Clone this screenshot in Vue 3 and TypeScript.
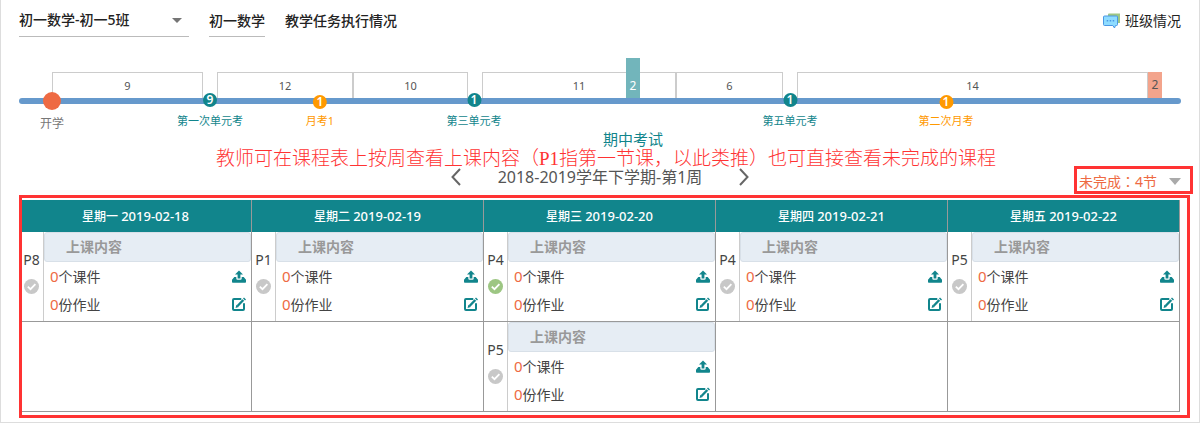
<script setup lang="ts">
import { ref } from 'vue'

interface Span { width: number; label?: string; kind: 'gap' | 'range' | 'holiday' }
interface Point { at: number; kind: string; count?: string; name: string }
interface Lesson { period: string; done: boolean }

const total = 1162
const spans: Span[] = [
  { width: 33, kind: 'gap' },
  { width: 151, label: '9', kind: 'range' },
  { width: 14, kind: 'gap' },
  { width: 136, label: '12', kind: 'range' },
  { width: 115, label: '10', kind: 'range' },
  { width: 14, kind: 'gap' },
  { width: 194, label: '11', kind: 'range' },
  { width: 107, label: '6', kind: 'range' },
  { width: 14, kind: 'gap' },
  { width: 351, label: '14', kind: 'range' },
  { width: 14, label: '2', kind: 'holiday' },
  { width: 19, kind: 'gap' },
]
const points: Point[] = [
  { at: 33, kind: 'start', name: '开学' },
  { at: 191, kind: 'unit', count: '9', name: '第一次单元考' },
  { at: 301, kind: 'month', count: '1', name: '月考1' },
  { at: 455, kind: 'unit', count: '1', name: '第三单元考' },
  { at: 614, kind: 'midterm', count: '2', name: '期中考试' },
  { at: 771, kind: 'unit', count: '1', name: '第五单元考' },
  { at: 927, kind: 'month', count: '1', name: '第二次月考' },
]
const days = [
  { day: '星期一', date: '2019-02-18' },
  { day: '星期二', date: '2019-02-19' },
  { day: '星期三', date: '2019-02-20' },
  { day: '星期四', date: '2019-02-21' },
  { day: '星期五', date: '2019-02-22' },
]
const rows: (Lesson | null)[][] = [
  [
    { period: 'P8', done: false },
    { period: 'P1', done: false },
    { period: 'P4', done: true },
    { period: 'P4', done: false },
    { period: 'P5', done: false },
  ],
  [null, null, { period: 'P5', done: false }, null, null],
]
const course = ref('初一数学-初一5班')
const pending = ref('未完成：4节')
</script>

<template>
  <main class="page">
    <header class="top">
      <div class="pick course">
        <select v-model="course" aria-label="课程班级">
          <option>初一数学-初一5班</option>
        </select>
        <svg class="caret" width="10" height="5" viewBox="0 0 10 5"><path d="M0 0h10L5 5z" fill="#757575" /></svg>
      </div>
      <a class="tab current" href="#course">初一数学</a>
      <a class="tab" href="#tasks">教学任务执行情况</a>
      <a class="class-link" href="#class">
        <svg width="18" height="16" viewBox="0 0 18 16">
          <path d="M6 .5h11v9.500h-3V4H5V1.500q0-1 1-1z" fill="#9dc683" />
          <path d="M1.500 3h12q1 0 1 1v7.500q0 1-1 1H12.500L11.500 15L9.800 12.500H1.500q-1 0-1-1V4q0-1 1-1z" fill="#8edcff" stroke="#4a97e4" />
          <path d="M3.700 7h1.500v1.500H3.700zM6.700 7h1.500v1.500H6.700zM9.700 7h1.500v1.500H9.700z" fill="#4a97e4" />
        </svg>
        班级情况
      </a>
    </header>

    <section class="timeline" aria-label="学期进度">
      <div class="spans">
        <div v-for="(s, i) in spans" :key="i" :class="['span', s.kind]" :style="{ width: (s.width / total) * 100 + '%' }">{{ s.label }}</div>
      </div>
      <div class="track"></div>
      <div v-for="p in points" :key="p.at" :class="['point', p.kind]" :style="{ left: (p.at / total) * 100 + '%' }">
        <span class="dot">{{ p.count }}</span>
        <span class="name">{{ p.name }}</span>
      </div>
    </section>

    <p class="note">教师可在课程表上按周查看上课内容（P1指第一节课，以此类推）也可直接查看未完成的课程</p>

    <div class="bar">
      <nav class="week">
        <button type="button" aria-label="上一周">
          <svg width="10" height="18" viewBox="0 0 10 18"><path d="M9 1L1.500 9L9 17" /></svg>
        </button>
        <h1>2018-2019学年下学期-第1周</h1>
        <button type="button" aria-label="下一周">
          <svg width="10" height="18" viewBox="0 0 10 18"><path d="M1 1L8.500 9L1 17" /></svg>
        </button>
      </nav>
      <div class="pick pending">
        <select v-model="pending" aria-label="未完成课程">
          <option>未完成：4节</option>
        </select>
        <svg class="caret" width="12" height="7" viewBox="0 0 12 7"><path d="M0 0h12L6 7z" fill="#aaa" /></svg>
      </div>
    </div>

    <div class="schedule">
      <table>
        <thead>
          <tr>
            <th v-for="d in days" :key="d.date" scope="col">{{ d.day }} <span>{{ d.date }}</span></th>
          </tr>
        </thead>
        <tbody>
          <tr v-for="(row, r) in rows" :key="r">
            <td v-for="(lesson, c) in row" :key="c">
              <div v-if="lesson" class="lesson">
                <div class="period">
                  {{ lesson.period }}
                  <svg :class="['state', { done: lesson.done }]" width="15" height="15" viewBox="0 0 15 15">
                    <circle cx="7.500" cy="7.500" r="7.500" />
                    <path d="M3.800 7.600L6.500 10.200L11.400 5.200" fill="none" stroke="#fff" stroke-width="1.800" />
                  </svg>
                </div>
                <div class="content">
                  <div class="title">上课内容</div>
                  <div class="line">
                    <span><b>0</b>个课件</span>
                    <button type="button" aria-label="上传课件">
                      <svg width="14" height="14" viewBox="0 0 14 14" fill="#11858c">
                        <path d="M7 1.500L11 5.500H8.400V9.500H5.600V5.500H3z" />
                        <path d="M2.300 8H4.300V9.500q0 1.300 1.300 1.300h2.800q1.300 0 1.300-1.300V8h2L14 10.700V13q0 .8-.8.8H.8Q0 13.800 0 13v-2.300z" />
                      </svg>
                    </button>
                  </div>
                  <div class="line">
                    <span><b>0</b>份作业</span>
                    <button type="button" aria-label="布置作业">
                      <svg width="14" height="14" viewBox="0 0 14 14" fill="none" stroke="#11858c">
                        <path d="M9.300 2H2q-1 0-1 1V12q0 1 1 1h9q1 0 1-1V6.200" stroke-width="2" />
                        <path d="M5.500 9L11.300 3" stroke-width="2.400" />
                        <path d="M3.600 10.900L4.400 7.800L6.700 10.100z" fill="#11858c" stroke="none" />
                        <path d="M12 .5L14 2.500L13 3.500L11 1.500z" fill="#11858c" stroke="none" />
                      </svg>
                    </button>
                  </div>
                </div>
              </div>
            </td>
          </tr>
        </tbody>
      </table>
      <div class="outline"></div>
    </div>
  </main>
</template>

<style>
body { background: #fff; }
</style>

<style scoped>
* { box-sizing: border-box; }
.page {
  margin-right: 4px;
  padding: 0 18px 10px;
  border: 1px solid #ddd;
  border-top: 0;
  background: #fff;
  color: #444;
  font: 14px/20px "Noto Sans", "Noto Sans CJK SC", sans-serif;
}
svg { display: block; flex: none; }
a { color: inherit; text-decoration: none; }
button { padding: 0; border: 0; background: none; cursor: pointer; }

.top { display: flex; align-items: flex-end; height: 37px; color: #222; }
.pick { position: relative; display: flex; align-items: center; }
.pick select {
  width: 100%;
  padding: 0;
  border: 0;
  outline: 0;
  background: none;
  color: inherit;
  font: inherit;
  appearance: none;
}
.caret { position: absolute; pointer-events: none; }
.course { width: 170px; height: 33px; margin-right: 20px; border-bottom: 1px solid #bbb; font-weight: 500; }
.course .caret { right: 7px; }
.tab { height: 26px; margin-right: 20px; font-weight: 500; }
.current { border-bottom: 1px solid #bbb; }
.class-link { display: flex; align-items: center; gap: 4px; height: 30px; padding-bottom: 2px; margin-left: auto; }

.timeline { position: relative; height: 76px; margin-top: 35px; }
.spans { display: flex; height: 26px; font-size: 11px; line-height: 26px; text-align: center; color: #555; }
.span { flex: none; }
.range { border: 1px solid #ccc; border-bottom: 0; }
.holiday { background: #f3a48c; font-size: 12px; }
.track { height: 6px; border-radius: 3px; background: #6699cc; }
.point {
  position: absolute;
  top: 21px;
  display: flex;
  flex-direction: column;
  align-items: center;
  transform: translateX(-50%);
  white-space: nowrap;
  font-size: 11px;
  line-height: 14px;
}
.dot { width: 14px; height: 14px; border-radius: 7px; color: #fff; font-size: 12px; font-weight: 600; text-align: center; }
.name { margin-top: 7px; }
.unit { color: #11858c; }
.unit .dot { background: #11858c; }
.month { top: 23px; color: #ff9900; }
.month .dot { background: #ff9900; }
.month .name { margin-top: 5px; }
.start { top: 20px; color: #777; font-size: 12px; }
.start .dot { width: 18px; height: 18px; border-radius: 9px; background: #ee6a43; }
.midterm { top: -14px; color: #11858c; font-size: 15px; }
.midterm .dot { width: 14px; height: 40px; padding-top: 21px; border-radius: 0; background: #72b5bb; font-weight: 400; }
.midterm .name { margin-top: 34px; }

.note {
  margin: 0;
  padding-left: 12px;
  color: #ff3333;
  font: 19px/22px "Liberation Serif", "Noto Sans CJK SC", serif;
  font-weight: 300;
  text-align: center;
}
.bar { display: grid; grid-template-columns: 1fr auto 1fr; align-items: start; height: 30px; }
.week { grid-column: 2; display: flex; align-items: center; justify-content: space-between; width: 298px; height: 14px; }
.week h1 { margin: 0; font-size: 16px; line-height: 18px; font-weight: 400; color: #555; }
.week path { fill: none; stroke: #666; stroke-width: 2; }
.pending {
  justify-self: end;
  width: 119px;
  height: 28px;
  margin: -4px -12px 0 0;
  padding: 3px 2px 0;
  border: 3px solid #ff3333;
  color: #ee6a43;
  font-family: "Noto Sans", "Noto Sans CJK TC", sans-serif;
}
.pending .caret { right: 9px; }

.schedule { position: relative; padding: 0 1px; }
.outline { position: absolute; inset: -5px -9px -6px 0; border: 3px solid #ff3333; pointer-events: none; }
table { width: 100%; table-layout: fixed; border-collapse: separate; border-spacing: 0; }
th {
  height: 32px;
  padding: 0;
  border-right: 1px solid #999;
  background: #11858c;
  color: #fff;
  font-size: 12px;
  font-weight: 500;
}
th span { font-size: 13px; }
td { height: 90px; padding: 0; border-right: 1px solid #999; border-bottom: 1px solid #999; vertical-align: top; }
.lesson { display: flex; height: 89px; }
.period {
  display: flex;
  flex-direction: column;
  align-items: center;
  gap: 9px;
  width: 24px;
  padding-top: 18px;
  border-right: 1px solid #ccc;
}
.state { fill: #c8c8c8; }
.state.done { fill: #9dc683; }
.content { flex: 1; }
.title {
  height: 30px;
  padding-left: 21px;
  border: 1px solid #d8e0e8;
  border-radius: 3px;
  background: #e6edf4;
  color: #999;
  font-weight: 700;
  line-height: 28px;
}
.line { display: flex; align-items: center; justify-content: space-between; height: 28px; padding: 0 5px 0 6px; }
.line b { color: #ee6a43; font-size: 15px; font-weight: 400; }
</style>
